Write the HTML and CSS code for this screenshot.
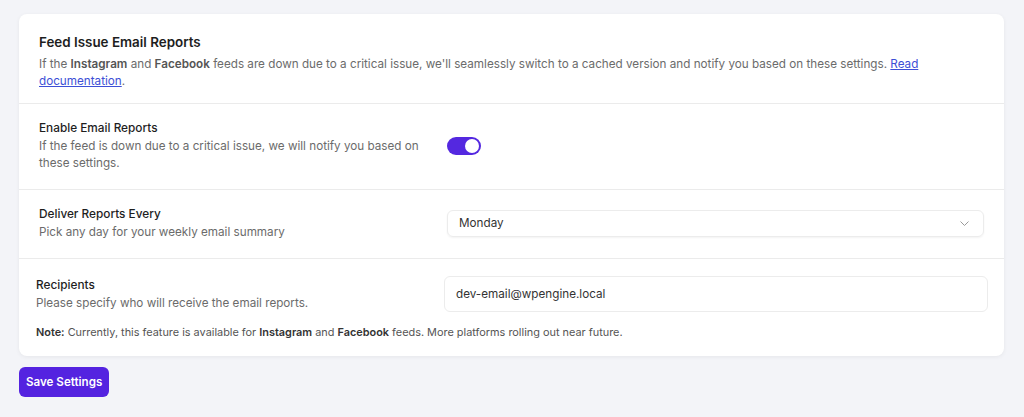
FILE: index.html
```html
<!DOCTYPE html>
<html lang="en">
<head>
  <meta charset="UTF-8">
  <meta name="viewport" content="width=device-width, initial-scale=1.0">
  <title>Feed Issue Email Reports</title>
  <link rel="stylesheet" href="styles.css">
</head>
<body>

  <div class="card">
    <div class="card-head">
      <h2>Feed Issue Email Reports</h2>
      <p class="desc">If the <b>Instagram</b> and <b>Facebook</b> feeds are down due to a critical issue, we'll seamlessly switch to a cached version and notify you based on these settings. <a href="#">Read documentation</a>.</p>
    </div>

    <div class="row">
      <div class="label">
        <h3>Enable Email Reports</h3>
        <p class="desc">If the feed is down due to a critical issue, we will notify you based on these settings.</p>
      </div>
      <div class="control">
        <span class="toggle"><span class="knob"></span></span>
      </div>
    </div>

    <div class="row">
      <div class="label">
        <h3>Deliver Reports Every</h3>
        <p class="desc">Pick any day for your weekly email summary</p>
      </div>
      <div class="control">
        <div class="select">
          <span>Monday</span>
          <svg width="9" height="5" viewBox="0 0 9 5"><path d="M0.5 0.5l4 4 4-4" fill="none" stroke="#9a9a9a" stroke-width="1"/></svg>
        </div>
      </div>
    </div>

    <div class="row last">
      <div class="row-inner">
        <div class="label">
          <h3>Recipients</h3>
          <p class="desc">Please specify who will receive the email reports.</p>
        </div>
        <div class="control">
          <div class="input">dev-email@wpengine.local</div>
        </div>
      </div>
      <p class="note"><b>Note:</b> Currently, this feature is available for <b>Instagram</b> and <b>Facebook</b> feeds. More platforms rolling out near future.</p>
    </div>
  </div>

  <button class="save">Save Settings</button>

</body>
</html>
```

FILE: styles.css
```css
body {
  background-color: #f3f4f8;
  color: #1e1e1e;
  font-family: Inter, 'Noto Sans', sans-serif;
  margin: 0;
  padding: 14px 20px 0 19px;
}

.card {
  background: #fff;
  border-radius: 8px;
  box-shadow: 0 1px 4px rgba(0, 0, 0, 0.06);
  margin-bottom: 11px;
}

.card-head {
  padding: 18px 20px 13px;
  border-bottom: 1px solid #ebebeb;
}

h2 {
  font-size: 13.4px;
  font-weight: 600;
  line-height: 20px;
  margin: 0 0 4px;
}

h3 {
  font-size: 11.8px;
  font-weight: 500;
  line-height: 18px;
  margin: 0 0 1px;
}

.desc {
  font-size: 11.7px;
  line-height: 17px;
  color: #6b6b6b;
  margin: 0;
}

.desc b {
  color: #555;
  font-weight: 600;
}

.desc a {
  color: #3d4fd6;
}

.row {
  display: grid;
  grid-template-columns: 388px 1fr;
  column-gap: 20px;
  align-items: center;
  padding: 15px 20px 17px;
  border-bottom: 1px solid #ebebeb;
}

.row.last {
  display: block;
  border-bottom: none;
  padding: 17px 16px 16px 17px;
}

.row-inner {
  display: grid;
  grid-template-columns: 388px 1fr;
  column-gap: 20px;
  align-items: center;
}

.toggle {
  display: block;
  width: 34px;
  height: 18px;
  border-radius: 9px;
  background: #5428e0;
  position: relative;
}

.knob {
  position: absolute;
  top: 2px;
  right: 2px;
  width: 14px;
  height: 14px;
  border-radius: 50%;
  background: #fff;
}

.select {
  display: flex;
  justify-content: space-between;
  align-items: center;
  height: 25px;
  padding: 0 14px 0 11px;
  border: 1px solid #ececec;
  border-radius: 6px;
  box-shadow: 0 1px 2px rgba(0, 0, 0, 0.05);
  font-size: 11.7px;
  color: #333;
}

.input {
  height: 34px;
  line-height: 34px;
  padding: 0 11px;
  border: 1px solid #ececec;
  border-radius: 6px;
  font-size: 11.7px;
  color: #333;
}

.note {
  font-size: 10.9px;
  line-height: 16px;
  color: #555;
  margin: 12px 0 0;
}

.note b {
  color: #333;
  font-weight: 600;
}

.save {
  background: #5423e0;
  color: #fff;
  border: none;
  border-radius: 6px;
  height: 30px;
  padding: 0 7px;
  font-family: Inter, sans-serif;
  font-size: 11.6px;
  font-weight: 600;
  cursor: pointer;
}
```
